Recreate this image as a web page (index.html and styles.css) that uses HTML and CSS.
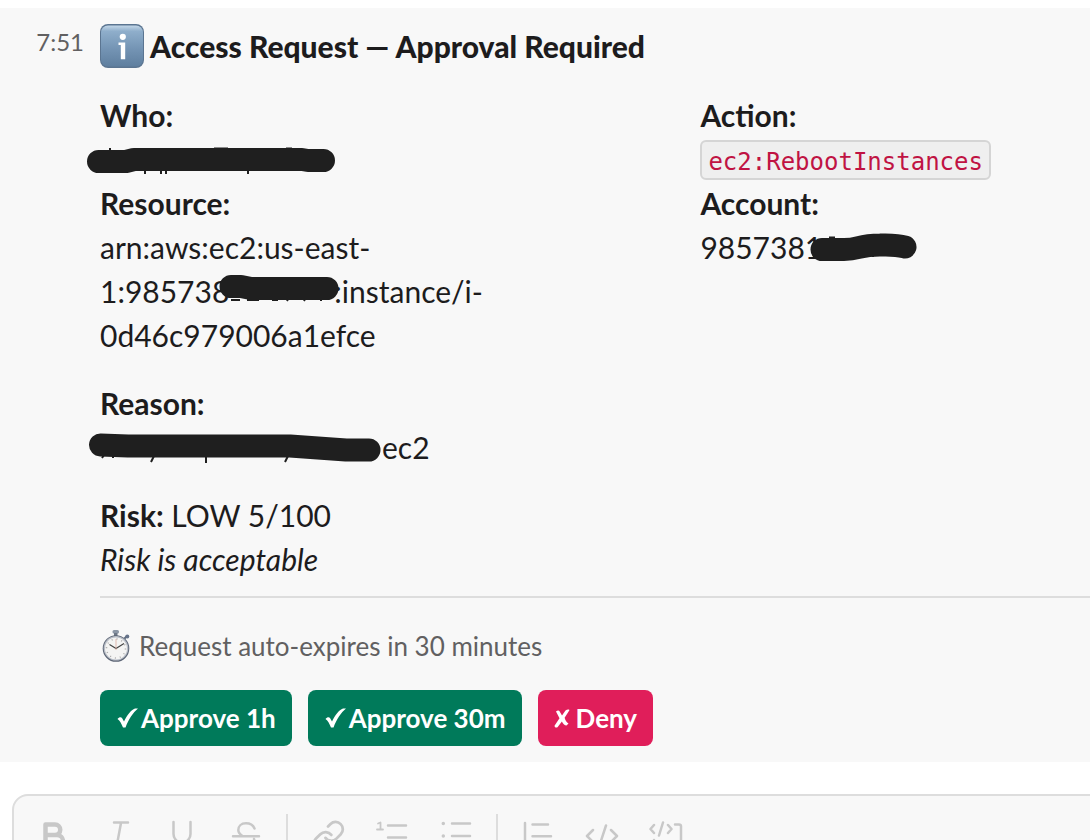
FILE: index.html
```html
<!DOCTYPE html>
<html lang="en">
<head>
  <meta charset="utf-8">
  <title>Access Request</title>
  <link rel="stylesheet" href="styles.css">
</head>
<body>

<div class="message">
  <div class="gutter"><a href="#" class="time">7:51</a></div>
  <div class="content">
    <h1 class="title">
      <svg class="emoji-info" viewBox="0 0 44 44" aria-hidden="true">
        <defs>
          <linearGradient id="info-bg" x1="0" y1="0" x2="0" y2="1">
            <stop offset="0" stop-color="#c3d7e8"/>
            <stop offset="0.14" stop-color="#8faecb"/>
            <stop offset="0.55" stop-color="#7595b5"/>
            <stop offset="1" stop-color="#5f7f9f"/>
          </linearGradient>
        </defs>
        <rect x="0" y="0" width="44" height="44" rx="8" fill="#5b7591"/>
        <rect x="1" y="1.5" width="42" height="41" rx="7" fill="url(#info-bg)"/>
        <circle cx="22.8" cy="12.8" r="3.1" fill="#fff"/>
        <path d="M18.5 18.600H25.200V35.200H20.800V21H18.500z" fill="#fff"/>
      </svg>
      <span>Access Request — Approval Required</span>
    </h1>

    <div class="fields">
      <div class="field">
        <b>Who:</b><br>
        <span class="redact">
          <svg class="scribble" width="250" height="44" viewBox="-13 0 250 44">
            <path class="peek" d="M10 11v4M82 11v3M91 11v3M98 11v3M114 11.500h14M186 11.500h6M45 33v4M61 33v4M66 33v4M148 33v4"/>
            <path d="M-1.500 24.500H26L34 22.500H202L208 23.500H223.500"/>
          </svg>
        </span>
      </div>
      <div class="field">
        <b>Action:</b><br>
        <code>ec2:RebootInstances</code>
      </div>
      <div class="field">
        <b>Resource:</b><br>
        arn:aws:ec2:us-east-<span class="line">1:985738<span class="redact redact-account">
          <svg class="scribble" width="124" height="44" viewBox="-13 0 124 44">
            <path class="peek" d="M2 31h9M18 31h12M43 31h6M60 28l-2 4M77 28l-2 4M92 28v4"/>
            <path d="M2 17.500L12 17.500L22 19.500H98"/>
          </svg>
        </span>:instance/i-</span>0d46c979006a1efce
      </div>
      <div class="field">
        <b>Account:</b><br>
        9857381<span class="redact">
          <svg class="scribble" width="116" height="44" viewBox="-12 0 116 44">
            <path class="peek" d="M8 12.500h6M36 28v4M52 28v4"/>
            <path d="M1 24.500H23C39 24.500 37 20 59 20C75 19.500 79 20.500 84 22"/>
          </svg>
        </span>
      </div>
    </div>

    <div class="section">
      <b>Reason:</b><br>
      <span class="redact redact-reason">
        <svg class="scribble" width="296" height="44" viewBox="-13 0 296 44">
          <path class="peek" d="M4 30l-2 3M13 30v3M54 31l-3 6M106 31v7M188 31l-3 6"/>
          <path d="M0.500 20L28 21H190L246 25H269"/>
        </svg>
      </span>ec2
    </div>

    <div class="section">
      <b>Risk:</b> LOW 5/100<br>
      <i>Risk is acceptable</i>
    </div>

    <hr>

    <div class="context">
      <svg class="emoji-clock" viewBox="0 0 32 32" aria-hidden="true">
        <rect x="12.500" y="0" width="6.500" height="3.600" rx="1.500" fill="#8b96a5"/>
        <rect x="14" y="3" width="3.500" height="3" fill="#6d7786"/>
        <path d="M24.500 8.500l2.500-2.500" stroke="#5e6b7e" stroke-width="2"/>
        <circle cx="27.300" cy="6.600" r="2" fill="#66738a"/>
        <circle cx="16" cy="18.500" r="13.300" fill="#5c6575"/>
        <circle cx="16" cy="18.200" r="12.300" fill="#b9bec7"/>
        <circle cx="16" cy="18.500" r="11" fill="#f4f4f3"/>
        <circle cx="16" cy="18.500" r="9.500" fill="none" stroke="#aaa" stroke-width="1.500" stroke-dasharray="1 4"/>
        <path d="M16 18.500L9.500 14.500M16 18.500L24 13.500" stroke="#444" stroke-width="1.200"/>
        <path d="M16 20V9" stroke="#d9a093" stroke-width="0.700"/>
      </svg>
      <span>Request auto-expires in 30 minutes</span>
    </div>

    <div class="actions">
      <button type="button" class="btn approve">
        <svg class="mark" width="22" height="20" viewBox="0 0 22 20"><path d="M1.500 11C3 9 5 8.500 6 10L8 13.500C11 7 15 2 19 0.500H22C17 4.500 12.500 11.500 9.500 19.500H7C5.500 16 4 12.500 1.500 11z" fill="#fff"/></svg>Approve 1h
      </button>
      <button type="button" class="btn approve">
        <svg class="mark" width="22" height="20" viewBox="0 0 22 20"><path d="M1.500 11C3 9 5 8.500 6 10L8 13.500C11 7 15 2 19 0.500H22C17 4.500 12.500 11.500 9.500 19.500H7C5.500 16 4 12.500 1.500 11z" fill="#fff"/></svg>Approve 30m
      </button>
      <button type="button" class="btn deny">
        <svg class="mark" width="19" height="20" viewBox="0 0 19 20"><path d="M2 3.500C3.500 2 5 2 5.700 3.500L8 7.500L11.500 2.500C13 1.500 14.500 1.200 15.500 2C14 4.500 12 7.500 10.600 9.800C11.500 12.500 12.500 14.500 14.500 15.500L12.500 17.500C10.500 17.500 8.800 15.500 7.900 13.500L3.500 19.300C2 20 0.500 19.500 0.500 17.800L5.500 10.200z" fill="#fff"/></svg>Deny
      </button>
    </div>
  </div>
</div>

<div class="composer">
  <div class="toolbar">
    <button type="button" class="tool" aria-label="Bold">
      <svg viewBox="0 0 40 40"><path stroke-width="4.500" d="M11.500 10.500H21a5.200 5.200 0 0 1 0 10.500H11.500zM11.500 21H23a6 6 0 0 1 0 12H11.500z"/></svg>
    </button>
    <button type="button" class="tool" aria-label="Italic">
      <svg viewBox="0 0 40 40"><path d="M16 8.500H30M23 9L18.500 33M10 33H26"/></svg>
    </button>
    <button type="button" class="tool" aria-label="Underline">
      <svg viewBox="0 0 40 40"><path d="M11.500 8V20a8.500 8.500 0 0 0 17 0V8M8 36H32"/></svg>
    </button>
    <button type="button" class="tool" aria-label="Strikethrough">
      <svg viewBox="0 0 40 40"><path d="M28.500 14.500C27 11 24 9.300 20 9.300C15 9.300 12.300 12.500 12.300 16C12.300 18.500 14 20.500 16.500 22M7 22.300H33M28 25C30 31 26 34 20 34C15 34 12 31.500 11 29"/></svg>
    </button>
    <span class="sep"></span>
    <button type="button" class="tool" aria-label="Link">
      <svg viewBox="0 0 40 40"><path transform="translate(3 5) scale(1.45)" stroke-width="1.900" d="M10 13a5 5 0 0 0 7.540.540l3-3a5 5 0 0 0-7.070-7.070l-1.720 1.710M14 11a5 5 0 0 0-7.540-.540l-3 3a5 5 0 0 0 7.070 7.070l1.710-1.710"/></svg>
    </button>
    <button type="button" class="tool" aria-label="Ordered list">
      <svg viewBox="0 0 40 40"><path stroke-width="1.800" d="M6 9.500L8.500 8.500V15.500M5 15.500H11"/><path d="M16 11.500H34M16 23.500H34M16 35H34"/></svg>
    </button>
    <button type="button" class="tool" aria-label="Bulleted list">
      <svg viewBox="0 0 40 40"><path stroke-width="3.500" d="M7.300 9.500v0.100M7.300 22v0.100M7.300 34v0.100"/><path d="M16 9.500H34M16 22H34M16 34H34"/></svg>
    </button>
    <span class="sep"></span>
    <button type="button" class="tool" aria-label="Quote">
      <svg viewBox="0 0 40 40"><path d="M7 9V36M14.500 10.500H30M14.500 22.300H33M14.500 34H30"/></svg>
    </button>
    <button type="button" class="tool" aria-label="Code">
      <svg viewBox="0 0 40 40"><path d="M11 16L5 22L11 28M24 11.500L17 33M29 16L35 22L29 28"/></svg>
    </button>
    <button type="button" class="tool" aria-label="Code block">
      <svg viewBox="0 0 40 40"><path d="M8 11L4.500 15L8 19M17 8.500L13 21.500M22 11L25.500 15L22 19M29 10.500H33Q35 10.500 35 12.500V34H8V26"/></svg>
    </button>
  </div>
</div>

</body>
</html>
```
FILE: styles.css
```css
body {
	margin: 0;
	height: 100vh;
	overflow: hidden;
	background: #fff;
	color: #1d1c1d;
	font-family: Lato, sans-serif;
	font-size: 30px;
	line-height: 44px;
}

b {
	font-weight: 700;
}

.message {
	display: flex;
	margin-top: 8px;
	padding: 16px 0;
	background: #f8f8f8;
}

.gutter {
	flex: none;
	box-sizing: border-box;
	width: 100px;
	padding-right: 16px;
	text-align: right;
	font-size: 24px;
	line-height: 36px;
}
.time {
	color: #616061;
	text-decoration: none;
}

.content {
	flex: 1;
	min-width: 0;
}

.title {
	display: flex;
	gap: 6px;
	margin: 0 0 25px;
	font-size: 30px;
	font-weight: 900;
}
.emoji-info {
	flex: none;
	width: 44px;
	height: 44px;
}

.fields {
	display: grid;
	grid-template-columns: 3fr 2fr;
	column-gap: 16px;
}

.section {
	margin-top: 24px;
}

.line {
	white-space: nowrap;
}

/* blacked out parts, the stroke lies over the text */
.redact {
	display: inline-block;
	position: relative;
	height: 44px;
	vertical-align: top;
}
.redact-account {
	width: 105px;
}
.redact-reason {
	width: 282px;
}
.scribble {
	position: absolute;
	top: 0;
	left: -13px;
	fill: none;
	stroke: #1f1f1f;
	stroke-width: 23;
	stroke-linecap: round;
	stroke-linejoin: round;
}
.peek {
	stroke-width: 2;
	stroke-linecap: butt;
}

code {
	display: inline-block;
	box-sizing: border-box;
	height: 40px;
	margin: 3px 0 1px;
	padding: 0 6px;
	border: 2px solid #d5d5d5;
	border-radius: 6px;
	background: #efefef;
	color: #c01343;
	font-family: "DejaVu Sans Mono", monospace;
	font-size: 24px;
	line-height: 40px;
	vertical-align: top;
}

hr {
	margin: 15px 0 26px;
	border: 0;
	border-top: 2px solid #dddddd;
}

.context {
	display: flex;
	align-items: center;
	gap: 7px;
	color: #616061;
	font-size: 26px;
}
.emoji-clock {
	width: 32px;
	height: 32px;
}

.actions {
	display: flex;
	gap: 16px;
	margin-top: 22px;
}
.btn {
	display: flex;
	align-items: center;
	height: 56px;
	padding: 0 16px;
	border: 0;
	border-radius: 8px;
	color: #fff;
	font-family: Lato, sans-serif;
	font-size: 26px;
	font-weight: 700;
}
.mark {
	margin-right: 3px;
}
.approve {
	background: #007a5a;
}
.deny {
	background: #e01e5a;
}

.composer {
	margin: 32px -16px 0 12px;
	padding: 10px 8px;
	border: 2px solid #dddddd;
	border-radius: 16px;
	background: #f8f8f8;
}
.toolbar {
	display: flex;
	align-items: center;
}
.tool {
	display: flex;
	align-items: center;
	justify-content: center;
	width: 64px;
	height: 56px;
	padding: 0;
	border: 0;
	background: none;
}
.tool svg {
	width: 40px;
	height: 40px;
	fill: none;
	stroke: #c8c8c8;
	stroke-width: 2.5;
	stroke-linecap: round;
	stroke-linejoin: round;
}
.sep {
	width: 2px;
	height: 40px;
	margin: 0 8px;
	background: #dddddd;
}
```
